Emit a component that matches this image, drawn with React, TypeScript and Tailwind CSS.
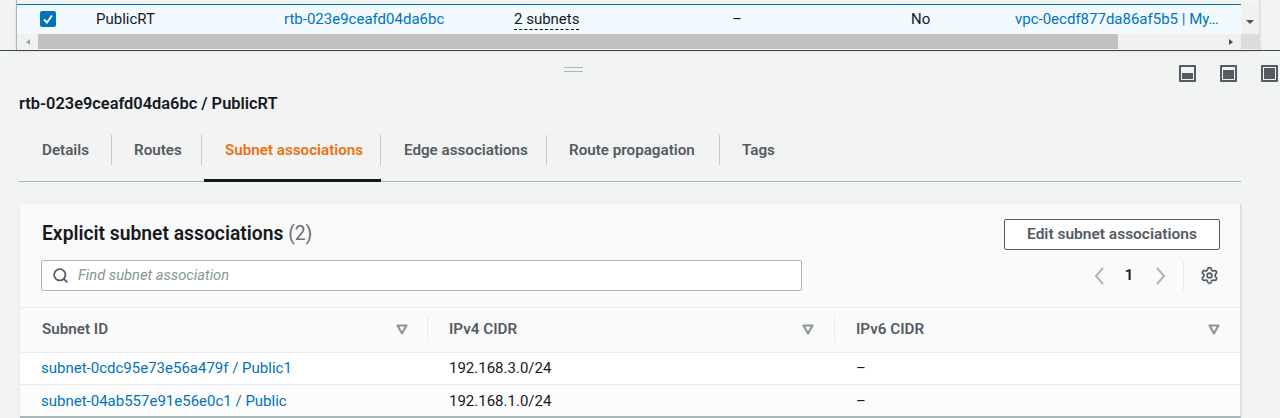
import { Search, Settings } from 'lucide-react';

const font = "font-['Roboto',sans-serif]";

const tabs = [
  { label: 'Details', width: 'w-[93px]', pad: 'pl-[23px]' },
  { label: 'Routes', width: 'w-[90px]', pad: 'pl-[22px]' },
  { label: 'Subnet associations', width: 'w-[177px] ml-[2px]', pad: 'pl-[21px]', active: true },
  { label: 'Edge associations', width: 'w-[166px]', pad: 'pl-[23px]' },
  { label: 'Route propagation', width: 'w-[173px]', pad: 'pl-[22px]' },
  { label: 'Tags', width: 'w-[80px]', pad: 'pl-[22px]' },
];

const rows = [
  { id: 'subnet-0cdc95e73e56a479f / Public1', cidr: '192.168.3.0/24', bg: 'bg-white' },
  { id: 'subnet-04ab557e91e56e0c1 / Public', cidr: '192.168.1.0/24', bg: 'bg-[#fcfcfc]' },
];

function FilterIcon() {
  return (
    <svg width="12" height="12" viewBox="0 0 12 12" className="shrink-0">
      <path d="M1.5 2.5h9L6 10.5z" fill="none" stroke="#879596" strokeWidth="2" strokeLinejoin="round" />
    </svg>
  );
}

function PanelIcon({ fill }: { fill: number }) {
  return (
    <svg width="17" height="17" viewBox="0 0 17 17">
      <rect x="0" y="0" width="17" height="17" rx="1" fill="#545b64" />
      <rect x="2" y="2" width="13" height="13" fill="#f2f3f3" />
      <rect x="3" y={15 - fill - 1} width="11" height={fill} fill="#545b64" />
    </svg>
  );
}

function Chevron({ d }: { d: string }) {
  return (
    <svg width="12" height="18" viewBox="0 0 12 18">
      <path d={d} fill="none" stroke="#aab7b8" strokeWidth="2" />
    </svg>
  );
}

function ColumnHead({ label, className }: { label: string; className: string }) {
  return (
    <div className={`flex items-center ${className}`}>
      <span className="text-[15.2px] font-semibold text-[#545b64]">{label}</span>
      <div className="ml-auto">
        <FilterIcon />
      </div>
    </div>
  );
}

export default function App() {
  return (
    <div className={`w-[1280px] h-[418px] overflow-hidden bg-[#f2f3f3] text-[15px] text-[#16191f] ${font}`}>
      {/* Selected row of the table above */}
      <div className="h-[51px] border-b border-[#414750] pl-[16px] pr-[20px]">
        <div className="h-[50px] pt-[4px] border-l border-r border-l-[#9fb8c4] border-r-[#d5dbdb] shadow-sm">
          <div className="flex">
            <div className="flex-1 min-w-0">
              <div className="flex items-center h-[30px] bg-[#f1faff] border-t border-[#0073bb]">
                <div className="w-[79px] pl-[23px] pb-[2px]">
                  <div className="flex items-center justify-center w-[16px] h-[16px] rounded-[2px] bg-[#0073bb]">
                    <svg width="12" height="12" viewBox="0 0 12 12">
                      <path d="M2 6.5l3 3 5-7" fill="none" stroke="#fff" strokeWidth="2" />
                    </svg>
                  </div>
                </div>
                <div className="w-[188px]">PublicRT</div>
                <div className="w-[230px] text-[#0073bb]">rtb-023e9ceafd04da6bc</div>
                <div className="w-[218px]">
                  <span className="border-b border-dashed border-black pb-[1px]">2 subnets</span>
                </div>
                <div className="w-[179px]">–</div>
                <div className="w-[104px]">No</div>
                <div className="flex-1 text-[#0073bb] whitespace-nowrap">vpc-0ecdf877da86af5b5 | My…</div>
              </div>
              <div className="flex items-center h-[15px] bg-[#f1f1f1]">
                <div className="flex items-center justify-center w-[21px]">
                  <div className="border-y-[3px] border-r-[4px] border-y-transparent border-r-[#a3a3a3]" />
                </div>
                <div className="w-[1080px] h-[15px] bg-[#c1c1c1]" />
                <div className="flex-1 flex items-center justify-end pr-[8px]">
                  <div className="border-y-[3px] border-l-[4px] border-y-transparent border-l-[#505050]" />
                </div>
              </div>
            </div>
            <div className="w-[18px] flex flex-col bg-[#f1f1f1]">
              <div className="flex-1 flex items-center justify-center pt-[6px]">
                <div className="border-x-[4px] border-t-[4px] border-x-transparent border-t-[#505050]" />
              </div>
              <div className="h-[15px] bg-[#dcdcdc]" />
            </div>
          </div>
        </div>
      </div>

      {/* Split panel header */}
      <div className="flex pt-[14px] h-[38px]">
        <div className="ml-[564px] mt-[2px] w-[19px] h-[5px] border-y border-[#aab7b8]" />
        <div className="ml-auto flex gap-[24px] pr-[2px]">
          <PanelIcon fill={6} />
          <PanelIcon fill={9} />
          <PanelIcon fill={11} />
        </div>
      </div>

      <h2 className="pl-[19px] mt-[1px] h-[28px] text-[16.4px] leading-[28px] font-semibold">rtb-023e9ceafd04da6bc / PublicRT</h2>

      {/* Tabs */}
      <div className="ml-[19px] mr-[39px] mt-[17px] h-[47px] flex border-b border-[#aab7b8]">
        {tabs.map((tab, idx) => (
          <div key={tab.label} className={`relative h-[46px] ${tab.width}`}>
            <div
              className={`flex items-center h-[30px] text-[15.2px] font-semibold ${tab.pad} ${
                tab.active ? 'text-[#ec7211]' : 'text-[#545b64]'
              } ${idx < tabs.length - 1 ? 'border-r border-[#c5cbcb]' : ''}`}
            >
              {tab.label}
            </div>
            {tab.active && <div className="absolute left-0 right-0 bottom-[-1px] h-[3px] bg-[#16191f]" />}
          </div>
        ))}
      </div>

      {/* Card */}
      <div className="ml-[20px] mr-[39px] mt-[22px] h-[214px] bg-white border-r border-[#d5dbdb] border-b-2 border-b-[#aab7b8] shadow-sm">
        <div className="h-[104px] bg-[#fafafa] pt-[15px] pl-[21px] pr-[21px] border-b border-[#eaeded]">
          <div className="flex items-center justify-between h-[30px]">
            <h3 className="pl-[1px] text-[19.3px] font-semibold">
              Explicit subnet associations <span className="font-normal text-[#687078]">(2)</span>
            </h3>
            <button className="w-[216px] h-[31px] pt-[1px] -mr-[1px] bg-white border border-[#545b64] rounded-[2px] text-[15.5px] font-semibold text-[#545b64]">
              Edit subnet associations
            </button>
          </div>
          <div className="flex items-center mt-[11px]">
            <div className="flex items-center w-[761px] h-[31px] bg-white border border-[#aab7b8] rounded-[2px] pl-[10px]">
              <Search size={17} strokeWidth={2.5} className="text-[#545b64]" />
              <span className="ml-[9px] italic text-[14.7px] text-[#879596]">Find subnet association</span>
            </div>
            <div className="ml-auto flex items-center h-[31px]">
              <Chevron d="M10 1L3 9l7 8" />
              <span className="w-[50px] pr-[2px] text-center text-[15px] font-semibold">1</span>
              <Chevron d="M2 1l7 8-7 8" />
              <div className="ml-[16px] pl-[16px] h-[31px] flex items-center border-l border-[#eaeded]">
                <Settings size={19} strokeWidth={2.2} className="text-[#545b64]" />
              </div>
            </div>
          </div>
        </div>

        <div className="grid grid-cols-[408px_407px_1fr] h-[45px] pb-[2px] bg-[#fafafa] border-b border-[#eaeded] items-center">
          <ColumnHead label="Subnet ID" className="pl-[22px] pr-[19px] h-[26px] border-r border-[#eaeded]" />
          <ColumnHead label="IPv4 CIDR" className="pl-[21px] pr-[20px] h-[26px] border-r border-[#eaeded]" />
          <ColumnHead label="IPv6 CIDR" className="pl-[21px] pr-[20px] h-[26px]" />
        </div>
        {rows.map((row) => (
          <div key={row.id} className={`grid grid-cols-[408px_407px_1fr] h-[32px] last:h-[31px] last:pt-[1px] items-center border-b border-[#eaeded] last:border-b-0 ${row.bg}`}>
            <div className="pl-[21px] text-[#0073bb]">{row.id}</div>
            <div className="pl-[21px]">{row.cidr}</div>
            <div className="pl-[21px]">–</div>
          </div>
        ))}
      </div>
    </div>
  );
}
